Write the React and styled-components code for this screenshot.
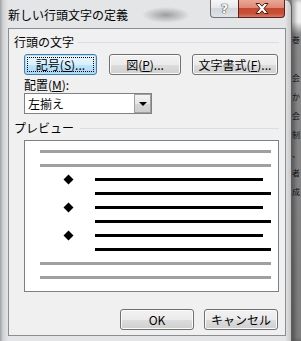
import React from "react";
import styled, { createGlobalStyle, css } from "styled-components";

const GlobalStyle = createGlobalStyle`
  html, body {
    margin: 0;
    padding: 0;
  }
  body {
    width: 301px;
    height: 341px;
    overflow: hidden;
    font-family: "Noto Sans CJK JP", "Noto Sans", sans-serif;
  }
  * {
    box-sizing: border-box;
  }
`;

const Screen = styled.div`
  display: flex;
  width: 301px;
  height: 341px;
  overflow: hidden;
  background: #7d7d7d;
`;

const Window = styled.div`
  width: 292px;
  height: 341px;
  flex-shrink: 0;
  display: flex;
  flex-direction: column;
  padding: 0 5px 5px 8px;
  border-right: 1px solid #5c5c5c;
  border-top-right-radius: 7px;
  background: linear-gradient(
    to right,
    #9ea1a4 0,
    #cfd1d3 3px,
    #e3e5e7 8px,
    #e3e5e7 calc(100% - 6px),
    #c4c6c8 100%
  );
`;

const TitleBar = styled.div`
  height: 28px;
  display: flex;
  align-items: flex-start;
  background: radial-gradient(
    ellipse 24px 8px at 158px 15px,
    rgba(70, 70, 70, 0.45),
    rgba(70, 70, 70, 0)
  );
`;

const Title = styled.div`
  margin-top: 8px;
  font-size: 12px;
  line-height: 14px;
  color: #000;
`;

const Caption = styled.div`
  margin-left: auto;
  margin-right: 1px;
  display: flex;
`;

const CaptionButton = styled.div`
  height: 18px;
  display: flex;
  align-items: center;
  justify-content: center;
  border: 1px solid #6f7377;
  border-top: none;
  ${(p) =>
    p.$close
      ? css`
          width: 47px;
          border-color: #5e2018;
          border-bottom-right-radius: 4px;
          background: linear-gradient(
            #e9a898 0%,
            #dc8a76 45%,
            #c9462d 50%,
            #c85238 80%,
            #d77b62 100%
          );
        `
      : css`
          width: 28px;
          border-right: none;
          border-bottom-left-radius: 4px;
          background: linear-gradient(#f5f6f7 0%, #e6e8ea 45%, #d3d7db 50%, #dfe3e6 100%);
        `}
`;

const HelpGlyph = styled.span`
  font-family: "DejaVu Sans", sans-serif;
  font-weight: bold;
  font-size: 13px;
  line-height: 14px;
  color: #fafafa;
  text-shadow: 0 0 1px #4a4a4a, 0 0 1px #4a4a4a, 0 0 1px #4a4a4a;
`;

const Client = styled.div`
  flex: 1;
  display: flex;
  flex-direction: column;
  padding: 6px 6px 0 5px;
  background: #f0f0f0;
  border: 1px solid #8a8e93;
`;

const GroupHeader = styled.div`
  display: flex;
  align-items: center;
  height: 14px;
  margin-top: ${(p) => p.$mt || 0}px;
  font-size: 12px;
  line-height: 14px;
  color: #000;
`;

const Rule = styled.div`
  flex: 1;
  height: 1px;
  margin-left: ${(p) => p.$gap}px;
  background: #d5dfe5;
`;

const Indent = styled.div`
  display: flex;
  flex-direction: column;
  padding-left: 10px;
`;

const ButtonRow = styled.div`
  display: flex;
  margin-top: 5px;
`;

const Button = styled.button`
  position: relative;
  width: ${(p) => p.$w}px;
  height: 21px;
  margin-left: ${(p) => p.$ml || 0}px;
  padding: 0;
  font-family: "Noto Sans CJK JP", "Noto Sans", sans-serif;
  font-size: 12px;
  line-height: 14px;
  color: #000;
  border: 1px solid #707070;
  border-radius: 3px;
  box-shadow: inset 0 0 0 1px #fbfbfb;
  background: linear-gradient(#f2f2f2 0%, #ebebeb 50%, #dddddd 51%, #cfcfcf 100%);
  ${(p) =>
    p.$focused &&
    css`
      border-color: #3c7fb1;
      box-shadow: inset 0 0 0 1px #b5def6;
      background: linear-gradient(#eaf6fd 0%, #d9f0fc 50%, #bee6fd 51%, #a7d9f5 100%);
      &::after {
        content: "";
        position: absolute;
        inset: 2px;
        border: 1px dotted #000;
      }
    `}
  u {
    text-decoration: underline;
    text-underline-offset: 1px;
  }
`;

const FieldLabel = styled.div`
  margin-top: 3px;
  font-size: 12px;
  line-height: 14px;
  color: #000;
`;

const Select = styled.div`
  margin-top: 1px;
  width: 128px;
  height: 21px;
  display: flex;
  align-items: center;
  background: #fff;
  border: 1px solid #7f8185;
  font-size: 12px;
  line-height: 14px;
`;

const SelectText = styled.span`
  padding-left: 3px;
`;

const ArrowButton = styled.div`
  margin-left: auto;
  width: 17px;
  height: 19px;
  display: flex;
  align-items: center;
  justify-content: center;
  border: 1px solid #a0a0a0;
  background: linear-gradient(#f4f4f4 0%, #e6e6e6 50%, #d6d6d6 51%, #cdcdcd 100%);
`;

const Triangle = styled.span`
  width: 0;
  height: 0;
  border-left: 4px solid transparent;
  border-right: 4px solid transparent;
  border-top: 4px solid #000;
`;

const PreviewBox = styled.div`
  margin-top: 5px;
  height: 152px;
  display: flex;
  flex-direction: column;
  gap: 11px;
  padding: 9px 0 0 15px;
  background: #fff;
  border: 1px solid #7c7f84;
`;

const Line = styled.div`
  height: 3px;
  flex-shrink: 0;
  width: ${(p) => p.$w}px;
  margin-left: ${(p) => p.$ml || 0}px;
  background: ${(p) => (p.$gray ? "#a0a0a0" : "#000")};
`;

const BulletRow = styled.div`
  display: flex;
  align-items: center;
  height: 3px;
`;

const Diamond = styled.svg`
  flex-shrink: 0;
  margin-left: 23px;
  width: 11px;
  height: 11px;
`;

const Footer = styled.div`
  display: flex;
  justify-content: flex-end;
  gap: 10px;
  margin-top: 17px;
  padding-right: 1px;
`;

const Backdrop = styled.div`
  flex: 1;
  overflow: hidden;
  display: flex;
  flex-direction: column;
  padding-top: 34px;
  padding-left: 0;
  background: linear-gradient(#f2f2f2 0, #f2f2f2 22px, #8d8d8d 34px, #7e7e7e 100%);
  box-shadow: inset 3px 0 4px rgba(0, 0, 0, 0.35);
`;

const BackdropChar = styled.span`
  height: 19px;
  font-size: 8px;
  line-height: 12px;
  color: #111;
  white-space: nowrap;
`;

const backdropChars = ["巻", "", "会", "か", "会", "制", "、", "者", "成"];

const Bullet = () => (
  <Diamond viewBox="0 0 11 11">
    <polygon points="5.5,0.5 10.5,5.5 5.5,10.5 0.5,5.5" fill="#000" />
  </Diamond>
);

export default function App() {
  return (
    <>
      <GlobalStyle />
      <Screen>
        <Window>
          <TitleBar>
            <Title>新しい行頭文字の定義</Title>
            <Caption>
              <CaptionButton>
                <HelpGlyph>?</HelpGlyph>
              </CaptionButton>
              <CaptionButton $close>
                <svg width="14" height="11" viewBox="0 0 14 11">
                  <polygon
                    points="1,0.5 4.5,0.5 7,3.2 9.5,0.5 13,0.5 9,5.5 13,10.5 9.5,10.5 7,7.8 4.5,10.5 1,10.5 5,5.5"
                    fill="#fff"
                    stroke="#4a1a12"
                    strokeWidth="1"
                    strokeLinejoin="round"
                  />
                </svg>
              </CaptionButton>
            </Caption>
          </TitleBar>

          <Client>
            <GroupHeader>
              行頭の文字
              <Rule $gap={4} />
            </GroupHeader>
            <Indent>
              <ButtonRow>
                <Button $w={73} $focused>
                  記号(<u>S</u>)...
                </Button>
                <Button $w={72} $ml={12}>
                  図(<u>P</u>)...
                </Button>
                <Button $w={86} $ml={11}>
                  文字書式(<u>F</u>)...
                </Button>
              </ButtonRow>
              <FieldLabel>
                配置(<u>M</u>):
              </FieldLabel>
              <Select>
                <SelectText>左揃え</SelectText>
                <ArrowButton>
                  <Triangle />
                </ArrowButton>
              </Select>
            </Indent>

            <GroupHeader $mt={7}>
              プレビュー
              <Rule $gap={6} />
            </GroupHeader>
            <Indent>
              <PreviewBox>
                <Line $gray $w={231} />
                <Line $gray $w={231} />
                {[0, 1, 2].map((i) => (
                  <React.Fragment key={i}>
                    <BulletRow>
                      <Bullet />
                      <Line $w={168} $ml={21} />
                    </BulletRow>
                    <Line $w={176} $ml={55} />
                  </React.Fragment>
                ))}
                <Line $gray $w={231} />
                <Line $gray $w={231} />
              </PreviewBox>
            </Indent>

            <Footer>
              <Button $w={74}>OK</Button>
              <Button $w={74}>キャンセル</Button>
            </Footer>
          </Client>
        </Window>
        <Backdrop>
          {backdropChars.map((c, i) => (
            <BackdropChar key={i}>{c}</BackdropChar>
          ))}
        </Backdrop>
      </Screen>
    </>
  );
}
